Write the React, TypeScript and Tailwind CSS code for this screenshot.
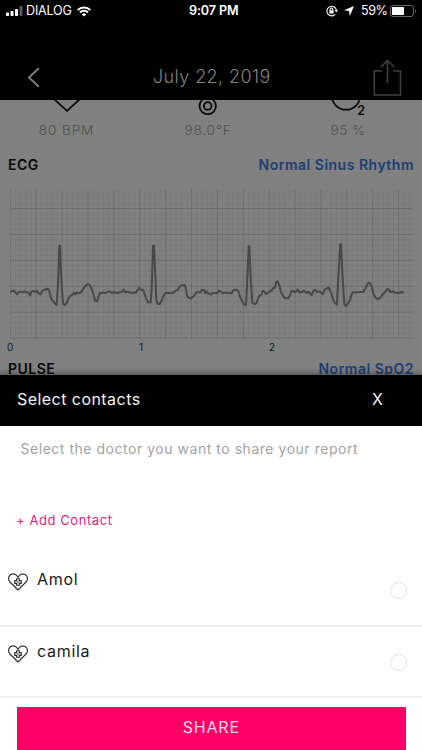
import { ReactNode } from "react";

const contacts = ["Amol", "camila"];

const vitals = [
  { label: "80 BPM", width: "w-[133px]", tracking: "tracking-[0.9px]" },
  { label: "98.0°F", width: "w-[150px]", tracking: "tracking-[0.8px]" },
  { label: "95 %", width: "w-[130px]", tracking: "tracking-[0.5px]" },
];

// ECG samples, three units per pixel
const trace =
  "30,322 36,318 42,317 46,323 51,328 56,322 62,320 68,322 74,319 80,322 85,323 90,331 94,320 100,318 106,321 110,317 116,325 121,328 127,318 134,314 140,311 145,312 149,322 153,339 158,347 164,354 170,360 174,300 176,240 178,182 180,182 182,240 185,300 189,357 194,360 200,354 205,342 210,333 217,329 222,324 226,328 230,323 236,325 243,322 250,311 257,302 264,297 269,300 275,312 280,326 285,347 291,349 296,335 299,324 304,325 309,322 315,325 321,321 328,319 335,323 343,322 352,324 360,322 365,321 371,314 376,322 383,320 390,323 400,323 409,322 412,316 418,309 423,314 429,314 433,324 438,340 444,352 452,352 455,310 457,250 459,182 462,182 465,250 469,345 473,357 479,357 485,348 489,335 494,327 501,323 510,324 520,323 527,317 533,315 539,305 546,301 554,300 558,312 561,332 566,338 573,341 578,336 583,332 588,323 594,321 600,323 605,315 612,315 616,325 620,319 626,326 633,329 638,324 645,324 652,323 657,317 664,321 669,325 675,323 684,324 694,325 701,315 709,314 715,318 720,334 726,348 733,359 738,361 742,280 746,184 748,184 752,280 757,353 763,357 769,355 774,342 778,332 784,330 788,318 792,318 797,326 803,325 810,319 817,314 821,308 825,308 829,290 833,289 838,301 842,319 849,333 856,340 864,340 870,332 873,320 878,317 883,322 888,319 893,314 900,323 906,321 912,317 920,324 926,321 930,325 935,330 941,316 945,314 951,321 957,319 962,322 968,328 974,314 983,309 987,309 993,322 999,344 1005,354 1011,358 1015,280 1021,178 1023,178 1028,280 1033,358 1038,363 1044,355 1050,345 1054,330 1058,322 1068,322 1080,321 1090,321 1097,308 1104,294 1109,293 1115,305 1120,325 1126,337 1134,343 1141,338 1148,328 1155,321 1162,312 1167,314 1171,321 1178,319 1184,323 1192,324 1199,323 1205,321 1211,324";

function StatusBar() {
  return (
    <div className="flex h-[22px] items-center text-white text-[12.6px]">
      <svg className="ml-[6px] h-[10px] w-[17px]" viewBox="0 0 17 10" fill="white">
        <rect x="0" y="6.5" width="3" height="3.5" rx=".7" />
        <rect x="4.5" y="5" width="3" height="5" rx=".7" />
        <rect x="9" y="3" width="3" height="7" rx=".7" />
        <rect x="13.5" y="0" width="3" height="10" rx=".7" opacity=".35" />
      </svg>
      <span className="ml-[3px] w-[45px] whitespace-nowrap tracking-[-0.2px]">DIALOG</span>
      <svg className="ml-[6px] h-[11px] w-[14px]" viewBox="0 0 14 11" fill="none" stroke="white" strokeWidth="2">
        <path d="M.7 4a8.9 8.9 0 0 1 12.6 0M3 6.5a5.6 5.6 0 0 1 8 0" />
        <path d="M7 10.6 4.8 8.4a3.1 3.1 0 0 1 4.4 0z" fill="white" stroke="none" />
      </svg>
      <span className="ml-[98px] w-[51px] whitespace-nowrap font-semibold tracking-[-0.1px]">9:07 PM</span>
      <svg className="ml-[86px] h-[12px] w-[12px]" viewBox="0 0 12 12" fill="none" stroke="white" strokeWidth="1.1">
        <path d="M9.2 9.4A4.8 4.8 0 1 1 10.4 5" />
        <path d="M8.6 5h3.400L10.300 7.400z" fill="white" stroke="none" />
        <rect x="3.4" y="5.3" width="4.2" height="3.2" fill="white" stroke="none" />
        <path d="M4.2 5.5V4.3a1.3 1.3 0 0 1 2.600 0v1.200" />
      </svg>
      <svg className="ml-[6px] h-[10px] w-[10px]" viewBox="0 0 10 10" fill="white">
        <path d="M10 0 5.800 10 5 5 0 4.200z" />
      </svg>
      <span className="ml-[7px] w-[26px] whitespace-nowrap tracking-[-0.5px]">59%</span>
      <svg className="ml-[3px] h-[12px] w-[27px]" viewBox="0 0 27 12">
        <rect x=".5" y=".5" width="23" height="11" rx="2.5" fill="none" stroke="#666" />
        <rect x="2" y="2" width="12" height="8" rx=".7" fill="white" />
        <path d="M25 4c1.300.5 1.300 3.500 0 4z" fill="#666" />
      </svg>
    </div>
  );
}

function Header() {
  return (
    <div className="flex h-[78px] items-start pt-[36px]">
      <svg className="ml-[27px] mt-[9px] h-[21px] w-[13px]" viewBox="0 0 13 21" fill="none" stroke="#808080" strokeWidth="1.9">
        <path d="M11.800 1.300 2 10.500l9.800 9.200" />
      </svg>
      <h1 className="ml-[113px] mt-[5px] w-[117px] whitespace-nowrap text-[18px] font-light leading-[28px] tracking-[0.4px] text-[#808080]">
        July 22, 2019
      </h1>
      <svg className="ml-[103px] h-[38px] w-[29px]" viewBox="0 0 29 38" fill="none" stroke="#404040" strokeWidth="1.6">
        <path d="M9 13H1.300v24h26.200V13H20M14.500 25V2.500M8 9l6.500-6.700L21 9" />
      </svg>
    </div>
  );
}

function Vitals() {
  return (
    <>
      <svg className="block h-[19px] w-full" viewBox="0 0 422 19" fill="none" stroke="#080808" strokeWidth="1.8">
        <path d="M54 -1 67 10.800 80 -1" />
        <circle cx="207.7" cy="6" r="8.2" />
        <circle cx="207.7" cy="6" r="3.8" />
        <circle cx="346" cy="-4.5" r="14.2" />
        <text x="357.3" y="14.6" fontSize="12.5" fontWeight="600" fill="#080808" stroke="none">2</text>
      </svg>
      <div className="flex h-[32px] text-center text-[13.6px] leading-[22px] text-[#505050]">
        {vitals.map((v) => (
          <span key={v.label} className={`${v.width} ${v.tracking} font-light`}>{v.label}</span>
        ))}
      </div>
    </>
  );
}

function SectionTitle({ title, children }: { title: string; children: ReactNode }) {
  return (
    <div className="flex h-[26px] items-center justify-between pl-[8px] pr-[8px] text-[14px] font-semibold">
      <span className="tracking-[0.5px] text-[#080808]">{title}</span>
      <span className="tracking-[0.5px] text-[#1e3d73]">{children}</span>
    </div>
  );
}

function EcgChart() {
  const cols = Array.from({ length: 78 }, (_, i) => i);
  const rows = Array.from({ length: 29 }, (_, i) => i);

  return (
    <div className="pt-[13px]">
      <svg className="ml-[10px] block h-[149px] w-[404px]" viewBox="30 15 1212 447" fill="none">
        {cols.map((i) => (
          <path key={i} d={`M${31 + i * 15.53} 15V460`} stroke={i % 5 ? "#777" : "#6b6b6b"} strokeWidth={i % 5 ? 1.8 : 2.5} />
        ))}
        {rows.map((i) => (
          <path key={i} d={`M30 ${459 - i * 15.53}H1241`} stroke={i % 5 ? "#777" : "#6b6b6b"} strokeWidth={i % 5 ? 1.8 : 2.5} />
        ))}
        <polyline points={trace} stroke="#484848" strokeWidth="6" strokeLinejoin="round" />
      </svg>
      <div className="flex h-[16px] pl-[7px] text-[10px] leading-[17px] text-[#181818]">
        <span className="w-[132px]">0</span>
        <span className="w-[130px]">1</span>
        <span>2</span>
      </div>
    </div>
  );
}

function HeartIcon() {
  return (
    <svg className="h-[18px] w-[20px] shrink-0" viewBox="0 0 20 18" fill="none" stroke="#2a2a2a" strokeWidth="1.1" strokeLinejoin="round">
      <path d="M10 17 2 9C.5 7.400.2 5 1.300 3.100 3 .1 7.400.1 9.300 3.200L10 4.500l.7-1.300C12.600.1 17 .1 18.700 3.100 19.800 5 19.500 7.400 18 9z" />
      <path d="M8.600 5.700h2.800v1.900h1.900v2.800h-1.900v1.900H8.600v-1.900H6.700V7.600h1.900z" />
      <path d="M10 7.300v3.400M8.300 9h3.400" strokeWidth=".5" />
    </svg>
  );
}

function ContactRow({ name }: { name: string }) {
  return (
    <div className="flex h-[71.500px] items-start border-b-2 border-[#f0f0f6] pl-[8px] pr-[15px]">
      <div className="mt-[18px] flex flex-1">
        <HeartIcon />
        <span className="-mt-[6px] ml-[9px] text-[16px] leading-[24px] tracking-[0.7px] text-[#181818]">{name}</span>
      </div>
      <span className="mt-[27px] h-[17px] w-[17px] rounded-full border border-[#dedede]" />
    </div>
  );
}

export default function App() {
  return (
    <div className="flex h-[750px] w-[422px] flex-col overflow-hidden bg-[#808080] font-['Inter','Liberation_Sans',sans-serif]">
      <div className="h-[100px] shrink-0 bg-black">
        <StatusBar />
        <Header />
      </div>

      <div className="h-[275px] shrink-0">
        <Vitals />
        <SectionTitle title="ECG">Normal Sinus Rhythm</SectionTitle>
        <EcgChart />
        <SectionTitle title="PULSE">Normal SpO2</SectionTitle>
      </div>

      {/* Share sheet */}
      <div className="relative flex flex-1 flex-col bg-white shadow-[0_0_7px_rgba(0,0,0,0.6)]">
        <div className="flex h-[51px] shrink-0 items-center justify-between bg-black pb-[3px] pl-[17px] pr-[39px] text-[16px] text-[#f2f2f2]">
          <span className="tracking-[0.45px]">Select contacts</span>
          <span>X</span>
        </div>
        <p className="mt-[13px] pl-[20.500px] text-[14px] leading-[20px] tracking-[0.53px] text-[#a3a3a3]">
          Select the doctor you want to share your report
        </p>
        <button className="mt-[51px] self-start pl-[16px] text-[13px] leading-[20px] tracking-[0.57px] text-[#e0247c]">
          + Add Contact
        </button>
        <div className="mt-[25px]">
          {contacts.map((name) => (
            <ContactRow key={name} name={name} />
          ))}
        </div>
        <button className="ml-[16.500px] mt-[9px] h-[43px] w-[389.500px] shrink-0 bg-[#ff0066] pb-[3px] text-[16px] tracking-[0.8px] text-[#ffdbe9]">
          SHARE
        </button>
      </div>
    </div>
  );
}
